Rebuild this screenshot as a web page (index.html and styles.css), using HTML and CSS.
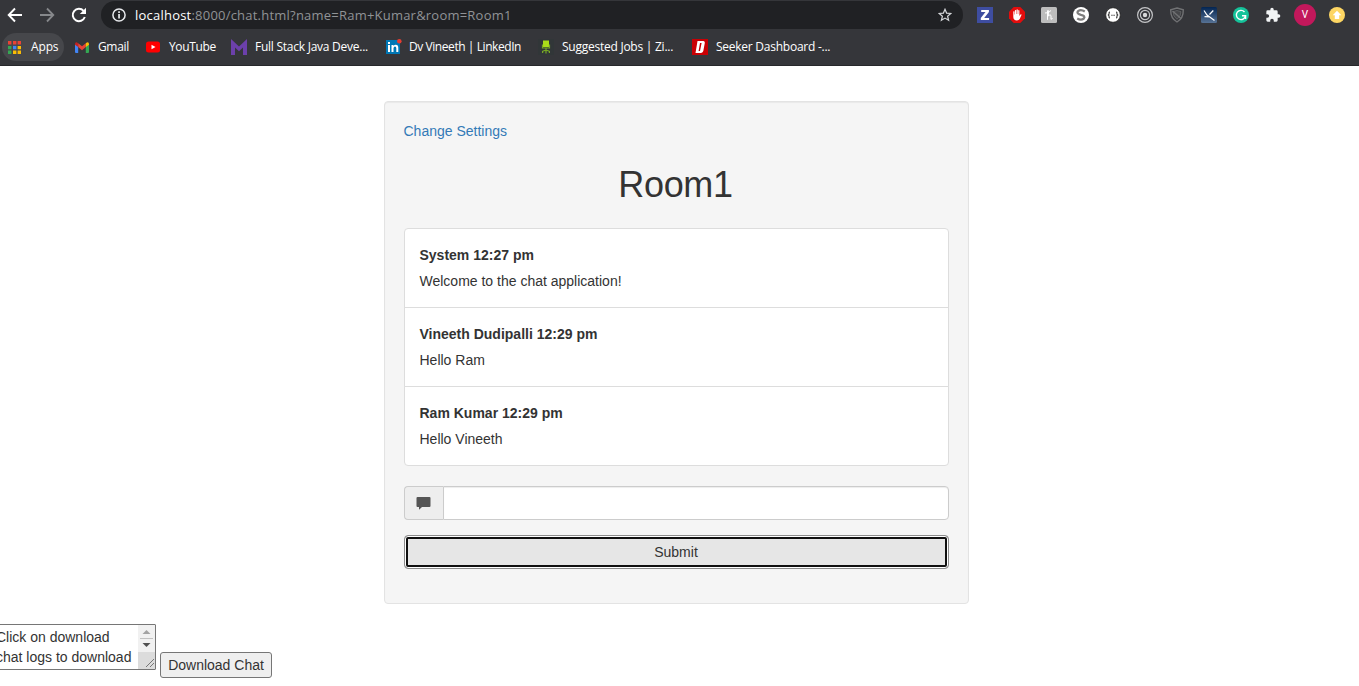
FILE: index.html
```html
<!DOCTYPE html>
<html lang="en">
<head>
<meta charset="utf-8">
<title>Chat</title>
<link rel="stylesheet" href="styles.css">
</head>
<body>
<header class="browser">
  <div class="toolbar">
    <nav class="nav">
      <svg width="16" height="16" viewBox="0 0 16 16" fill="none" stroke="#fff" stroke-width="1.9"><path d="M15 8H2M8 1.500L1.700 8L8 14.500"/></svg>
      <svg width="16" height="16" viewBox="0 0 16 16" fill="none" stroke="#86888b" stroke-width="1.8"><path d="M1 8h13M8 1.500L14.300 8L8 14.500"/></svg>
      <svg width="16" height="16" viewBox="0 0 16 16" fill="none" stroke="#fff" stroke-width="2"><path d="M13.800 10A6.200 6.200 0 1 1 12.600 3.800"/><path d="M15 .8V7H8.800z" fill="#fff" stroke="none"/></svg>
    </nav>
    <div class="omnibox">
      <svg width="14" height="14" viewBox="0 0 14 14"><circle cx="7" cy="7" r="6.100" fill="none" stroke="#e8eaed" stroke-width="1.500"/><path d="M6.200 6h1.700v4.500H6.200zM6.200 3.300h1.700v1.600H6.200z" fill="#e8eaed"/></svg>
      <span class="url"><b>localhost</b><span class="path">:8000/chat.html?name=Ram+Kumar&amp;room=Room1</span></span>
      <svg class="star" width="14" height="14" viewBox="0 0 14 14" fill="none" stroke="#d5d7da" stroke-width="1.200"><path d="M7 1.300L8.600 5.100L12.800 5.500L9.600 8.200L10.600 12.300L7 10.100L3.400 12.300L4.400 8.200L1.200 5.500L5.400 5.100z"/></svg>
    </div>
    <div class="extensions">
      <span><svg width="16" height="16" viewBox="0 0 16 16"><path fill="#3e4da0" d="M0 0h16v16H0z"/><path d="M4.200 3h7.700v2L7.200 11h4.900v2H3.800v-2l4.700-6H4.200z" fill="#fff"/></svg></span>
      <span><svg width="16" height="16" viewBox="0 0 16 16"><path fill="#e30d0d" d="M4.700 0h6.600L16 4.700v6.600L11.300 16H4.700L0 11.300V4.700z"/><path d="M4.300 8V4.600q.6-.7 1.200 0V7.500h.4V3.300q.6-.7 1.200 0V7h.4V2.700q.7-.7 1.300 0V7h.4V3.400q.6-.6 1.200 0V9l1-1.400q.9-.6 1.200.2L10.700 12q-.8 1.400-2.700 1.400-3.700 0-3.700-3.400z" fill="#fff"/></svg></span>
      <span><svg width="16" height="16" viewBox="0 0 16 16"><rect width="16" height="16" rx="1.500" fill="#bdbdbd"/><path d="M4 6Q7.500 6.500 10 3.500M6.500 12.800V3.800Q7 2.500 7.400 3.800V9Q9.300 6.700 10 8.500V12.300L11.700 11.300" fill="none" stroke="#fff" stroke-width="1"/></svg></span>
      <span><svg width="16" height="16" viewBox="0 0 16 16"><circle cx="8" cy="8" r="8" fill="#fff"/><path d="M11.800 4.500Q8 2.200 5.400 3.900C3 6 6 7.400 8 7.900C10.800 8.500 12.500 9.700 10.600 11.800Q8 13.600 4.200 11.500" fill="none" stroke="#7d7d7d" stroke-width="2.300"/></svg></span>
      <span><svg width="16" height="16" viewBox="0 0 16 16"><circle cx="8" cy="8" r="7.300" fill="#fff" stroke="#222" stroke-width=".8"/><path d="M5 5Q3.700 5 4.100 7L3.200 8l.9 1Q3.700 11 5 11M11 5q1.300 0 .9 2l.9 1-.9 1q.4 2-.9 2M6.300 8.200h.9M7.600 8.200h.9M8.900 8.200h.9" fill="none" stroke="#333" stroke-width="1.100"/></svg></span>
      <span><svg width="16" height="16" viewBox="0 0 16 16" fill="none" stroke="#c4c5c7" stroke-width="1.200"><circle cx="8" cy="8" r="7.400"/><circle cx="8" cy="8" r="4.600"/><circle cx="8" cy="8" r="2.200" fill="#d8d9da" stroke="none"/></svg></span>
      <span><svg width="16" height="16" viewBox="0 0 16 16" fill="none" stroke="#717274" stroke-width="1.400"><path d="M8 1L14.300 2.800Q14.500 11.500 8 15Q1.500 11.500 1.700 2.800z"/><path d="M8 3.500l4 1.200Q12 9.500 8 12.300Q4 9.500 4 4.700z" fill="#46474a" stroke-width=".6"/><path d="M3.500 4L12 11.500"/></svg></span>
      <span><svg width="16" height="16" viewBox="0 0 16 16"><defs><linearGradient id="sky" x2="0" y2="1"><stop stop-color="#032552"/><stop offset="1" stop-color="#577294"/></linearGradient></defs><rect width="16" height="16" rx="1.500" fill="url(#sky)"/><path d="M3 3.500L6 8L13.500 13.500M12.300 3.500L8.500 7.500M3.500 9.700L9 9.800" fill="none" stroke="#fff" stroke-width="1.200"/></svg></span>
      <span><svg width="16" height="16" viewBox="0 0 16 16"><circle cx="8" cy="8" r="8" fill="#15c39a"/><path d="M11.500 5A4.600 4.600 0 1 0 12.500 8.800H9M12.600 8.500V12" fill="none" stroke="#fff" stroke-width="1.400"/></svg></span>
      <span><svg width="16" height="16" viewBox="0 0 24 24"><path fill="#f1f3f4" d="M20.500 11H19V7a2 2 0 0 0-2-2h-4V3.500a2.500 2.500 0 0 0-5 0V5H4a2 2 0 0 0-2 2v3.800h1.500a2.700 2.700 0 0 1 0 5.400H2V20a2 2 0 0 0 2 2h3.800v-1.500a2.700 2.700 0 0 1 5.400 0V22H17a2 2 0 0 0 2-2v-4h1.500a2.500 2.500 0 0 0 0-5z"/></svg></span>
      <span><i class="avatar">V</i></span>
      <span><svg width="16" height="16" viewBox="0 0 16 16"><circle cx="8" cy="8" r="8" fill="#fdd663"/><path d="M8 3.800L12.300 8.300H10.200V12H5.800V8.300H3.700z" fill="#fff"/></svg></span>
    </div>
  </div>
  <div class="bookmarks">
    <a class="bm apps"><svg width="13" height="13" viewBox="0 0 13 13"><path fill="#ea4335" d="M0 0h3.400v3.400H0zM5 0h3.400v3.400H5zM9.600 0H13v3.400H9.600z"/><path fill="#34a853" d="M0 4.900h3.400v3.400H0zM0 9.600h3.400V13H0z"/><path fill="#4285f4" d="M5 4.900h3.400v3.400H5z"/><path fill="#fbbc04" d="M9.600 4.900H13v3.400H9.600zM5 9.600h3.400V13H5zM9.600 9.600H13V13H9.600z"/></svg><span>Apps</span></a>
    <a class="bm"><svg width="14" height="11" viewBox="0 0 14 11"><path fill="#4285f4" d="M0 2h3.200v9H1Q0 11 0 10z"/><path fill="#34a853" d="M10.800 2H14v8q0 1-1 1h-2.200z"/><path fill="#ea4335" d="M3.200 1.200L7 4.200l3.800-3V5L7 8.200L3.200 5z"/><path fill="#c5221f" d="M0 2Q.3-.8 3.200 1.200V5L0 2.700z"/><path fill="#fbbc04" d="M14 2Q13.700-.8 10.800 1.200V5L14 2.700z"/></svg><span>Gmail</span></a>
    <a class="bm"><svg width="14" height="12" viewBox="0 0 14 12"><rect y=".5" width="14" height="11" rx="2.500" fill="#f00"/><path fill="#fff" d="M5.500 3.700v4.600L9.500 6z"/></svg><span>YouTube</span></a>
    <a class="bm wide"><svg width="16" height="16" viewBox="0 0 16 16"><path fill="#6c40ab" d="M0 0l8 7.500L16 0v16h-4V8.500l-4 3.700-4-3.700V16H0z"/></svg><span>Full Stack Java Deve...</span></a>
    <a class="bm narrow"><svg width="16" height="16" viewBox="0 0 16 16"><path fill="#0077b5" d="M0 1h14v14H0z"/><path fill="#fff" d="M2 6h2v7H2zM2 3h2v2H2zM5.500 6h2v1Q8.300 5.800 9.800 5.800q2.500 0 2.500 3V13h-2V9.300Q10.300 7.600 9 7.600T7.500 9.300V13h-2z"/><circle cx="13.300" cy="2.300" r="2.300" fill="#e53d32"/></svg><span>Dv Vineeth | LinkedIn</span></a>
    <a class="bm wide"><svg width="16" height="16" viewBox="0 0 16 16"><path fill="#313638" d="M0 0h16v16H0z"/><path fill="#aadd19" d="M5 1.500h6V8H5z"/><path d="M4.500 5.500V9h7V5.500M8 9v5.500M4.600 14V12.300L8 11l3.400 1.300V14" fill="none" stroke="#78a824" stroke-width="1.200"/></svg><span>Suggested Jobs | Zi...</span></a>
    <a class="bm wide"><svg width="16" height="16" viewBox="0 0 16 16"><path fill="#c90004" d="M0 0h16v16H0z"/><path fill="#fff" fill-rule="evenodd" d="M5.500 2h6q1.700.4 1.300 2l-1.500 8q-.4 1.700-2.200 2H3.500zM8 4L6.600 12H8L9.600 4z"/></svg><span>Seeker Dashboard -...</span></a>
  </div>
</header>
<main>
  <section class="well">
    <a class="settings">Change Settings</a>
    <h1>Room1</h1>
    <ul class="messages">
      <li><strong>System 12:27 pm</strong><p>Welcome to the chat application!</p></li>
      <li><strong>Vineeth Dudipalli 12:29 pm</strong><p>Hello Ram</p></li>
      <li><strong>Ram Kumar 12:29 pm</strong><p>Hello Vineeth</p></li>
    </ul>
    <div class="input-group">
      <span class="addon"><svg width="15" height="14" viewBox="0 0 15 14"><path fill="#555" d="M1.500 1h12q1 0 1 1v8q0 1-1 1H6l-3 2.800V11H1.500q-1 0-1-1V2q0-1 1-1z"/></svg></span>
      <input type="text" aria-label="Message">
    </div>
    <button class="submit">Submit</button>
  </section>
  <section class="download">
    <div class="log">
      <p>Click on download<br>chat logs to download</p>
      <svg width="17" height="44" viewBox="0 0 17 44"><path fill="#f1f1f1" d="M0 0h17v27H0z"/><path fill="#dcdcdc" d="M0 27h17v17H0z"/><path fill="#a3a3a3" d="M4.500 9L8.500 5l4 4z"/><path fill="#c1c1c1" d="M2 13h13v1H2z"/><path fill="#505050" d="M4.500 18h8l-4 4z"/><path d="M8 42l8-8M12 42l4-4" stroke="#777"/></svg>
    </div>
    <button class="save">Download Chat</button>
  </section>
</main>
</body>
</html>
```

FILE: styles.css
```css
* { box-sizing: border-box; }
body { margin: 0; background: #fff; color: #333; font: 14px/20px "Liberation Sans", Arial, sans-serif; overflow: hidden; }
p, h1, ul { margin: 0; padding: 0; }
svg { display: block; flex: none; }

.browser { height: 66px; background: #35363a; border-bottom: 1px solid #27282b; font-family: "Open Sans", "Noto Sans", sans-serif; }
.toolbar { display: flex; height: 30px; padding-top: 1px; }
.nav { display: flex; align-items: center; gap: 16px; width: 101px; height: 28px; padding-left: 7px; }
.omnibox { display: flex; align-items: center; width: 862px; height: 28px; padding: 0 11px; border-radius: 14px; background: #202124; }
.url { margin-left: 9px; font-size: 13px; line-height: 20px; letter-spacing: .22px; color: #909396; white-space: nowrap; }
.url b { font-weight: 400; color: #fff; }
.star { margin-left: auto; }
.extensions { display: flex; margin-left: 6px; }
.extensions span { display: flex; align-items: center; justify-content: center; width: 32px; height: 28px; }
.avatar { width: 22px; height: 22px; border-radius: 50%; background: #c2185b; color: #fff; font: 10px/22px Roboto, sans-serif; text-align: center; }

.bookmarks { display: grid; grid-template-columns: 73px 71px 85px 155px 152px 154px 160px; height: 34px; padding: 3px 0 0 2px; }
.bm { display: flex; align-items: center; gap: 9px; height: 28px; color: #fff; font-size: 12px; line-height: 16px; letter-spacing: -.35px; white-space: nowrap; }
.wide { gap: 8px; letter-spacing: -.25px; }
.narrow { gap: 7px; letter-spacing: -.43px; }
.apps { width: 62px; padding-left: 6px; border-radius: 14px; background: #46474b; gap: 10px; letter-spacing: -.15px; }

.well { display: flex; flex-direction: column; width: 585px; height: 503px; margin: 35px 0 0 384px; padding: 19px; background: #f5f5f5; border: 1px solid #e3e3e3; border-radius: 4px; box-shadow: inset 0 1px 1px rgba(0, 0, 0, .05); }
.settings { color: #337ab7; margin-left: -.5px; }
h1 { margin: 24px 2px 23px 0; font-size: 36px; font-weight: 400; line-height: 40px; letter-spacing: -.3px; text-align: center; }
.messages { list-style: none; }
.messages li { height: 80px; padding: 16px 14.5px; background: #fff; border: 1px solid #ddd; }
.messages li + li { margin-top: -1px; }
.messages li:first-child { border-radius: 4px 4px 0 0; }
.messages li:last-child { border-radius: 0 0 4px 4px; }
.messages strong { display: block; margin-bottom: 6px; }
.input-group { display: flex; height: 34px; margin: 20px 0 15px; }
.addon { display: flex; align-items: center; justify-content: center; width: 39px; padding-right: 2px; background: #eee; border: 1px solid #ccc; border-right: 0; border-radius: 4px 0 0 4px; }
.input-group input { flex: 1; border: 1px solid #ccc; border-radius: 0 4px 4px 0; background: #fff; box-shadow: inset 0 1px 1px rgba(0, 0, 0, .075); }
button { padding: 0; color: #333; font: 14px/20px "Liberation Sans", Arial, sans-serif; }
.submit { height: 34px; padding-right: 1px; background: #e6e6e6; border: 1px solid #8c8c8c; border-radius: 4px; box-shadow: inset 0 0 0 1px #fff, inset 0 0 0 3px #101010; }

.download { display: flex; align-items: flex-start; gap: 4px; margin-top: 20px; }
.log { display: flex; justify-content: space-between; width: 162px; height: 46px; margin-left: -6px; padding-left: 1px; background: #fff; border: 1px solid #767676; border-radius: 1px; white-space: nowrap; }
.log p { padding-top: 2px; }
.save { width: 112px; height: 26px; margin-top: 28px; background: #efefef; border: 1px solid #767676; border-radius: 3px; }
```
